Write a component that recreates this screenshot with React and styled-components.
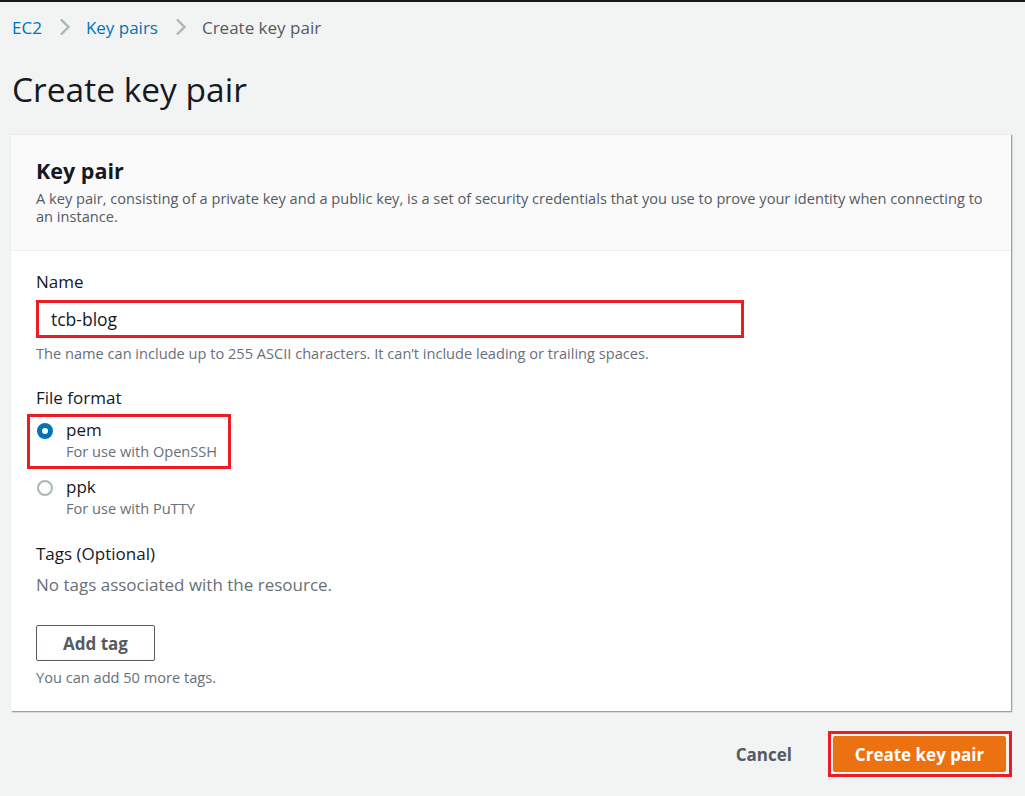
import styled, { createGlobalStyle } from "styled-components";

const GlobalStyle = createGlobalStyle`
   html, body {
      margin: 0;
      padding: 0;
      background: #f2f3f3;
   }
   body {
      font-family: "Open Sans", "Noto Sans", Arial, sans-serif;
      color: #16191f;
   }
`;

// styled
const Page = styled.div`
   min-height: 796px;
   box-sizing: border-box;
   border-top: 2px solid #1a1a1a;
   padding: 0 14px 0 11px;
`;
const Breadcrumbs = styled.nav`
   display: flex;
   align-items: center;
   height: 50px;
   padding-left: 1px;
   font-size: 17px;
   & a {
      color: #0073bb;
      text-decoration: none;
   }
   & .current {
      color: #545b64;
   }
`;
const Chevron = styled.span`
   display: flex;
   align-items: center;
   margin: 0 15px 0 17px;
`;
const Title = styled.h1`
   margin: 15px 0 23px 1px;
   font-size: 33.5px;
   font-weight: 400;
   line-height: 44px;
   color: #16191f;
`;
const Panel = styled.section`
   background: #fff;
   box-shadow: 1px 1px 1px 0 rgba(0, 28, 36, 0.3), 1px 1px 2px 0 rgba(0, 28, 36, 0.15);
   border-top: 1px solid #eaeded;
`;
const PanelHeader = styled.header`
   background: #fafafa;
   border-bottom: 1px solid #eaeded;
   padding: 22px 24px 25px 25px;
   & h2 {
      margin: 0 0 4px;
      font-size: 21.5px;
      font-weight: 700;
      line-height: 28px;
   }
   & p {
      margin: 0;
      font-size: 14.6px;
      line-height: 18px;
      color: #545b64;
   }
`;
const PanelBody = styled.div`
   padding: 20px 24px 25px 25px;
`;
const Field = styled.div`
   margin-bottom: ${(p) => p.gap || 20}px;
`;
const Label = styled.div`
   font-size: 17px;
   line-height: 22px;
   margin-bottom: ${(p) => p.below ?? 6}px;
`;
const Hint = styled.div`
   font-size: 14.6px;
   line-height: 18px;
   color: #687078;
   margin-top: ${(p) => p.top || 6}px;
`;
const TextInput = styled.div`
   width: 708px;
   height: 38px;
   box-sizing: border-box;
   border: 3px solid #ec1c24;
   display: flex;
   align-items: center;
   padding-left: 12px;
   font-size: 17.5px;
   color: #16191f;
`;
const RadioGroup = styled.div`
   display: flex;
   flex-direction: column;
   gap: 2px;
`;
const RadioOption = styled.label`
   display: flex;
   align-items: flex-start;
   gap: 13px;
   box-sizing: border-box;
   width: 204px;
   margin-left: -9px;
   padding: 2px 0 5px 7px;
   border: 3px solid ${(p) => (p.highlight ? "#ec1c24" : "transparent")};
   & .text {
      display: flex;
      flex-direction: column;
   }
   & .name {
      font-size: 17px;
      line-height: 22px;
   }
   & .sub {
      font-size: 14.6px;
      line-height: 20px;
      color: #687078;
   }
`;
const RadioDot = styled.span`
   flex: none;
   width: 16px;
   height: 16px;
   margin-top: 4px;
   box-sizing: border-box;
   border-radius: 50%;
   background: #fff;
   border: ${(p) => (p.checked ? "5px solid #0073bb" : "2px solid #aab7b8")};
`;
const EmptyText = styled.div`
   font-size: 17px;
   line-height: 22px;
   color: #687078;
   margin-top: 9px;
`;
const SecondaryButton = styled.button`
   display: block;
   margin-top: 29px;
   width: 119px;
   height: 36px;
   background: #fff;
   border: 1px solid #545b64;
   border-radius: 2px;
   font-family: inherit;
   font-size: 17px;
   font-weight: 700;
   color: #545b64;
`;
const Actions = styled.div`
   display: flex;
   justify-content: flex-end;
   align-items: center;
   margin-top: 20px;
   margin-right: -1px;
   gap: 36px;
`;
const LinkButton = styled.button`
   background: none;
   border: none;
   font-family: inherit;
   font-size: 17px;
   font-weight: 700;
   color: #545b64;
   padding: 0;
`;
const Highlight = styled.div`
   border: 3px solid #ec1c24;
   padding: 2px 3px 2px 2px;
`;
const PrimaryButton = styled.button`
   display: block;
   width: 173px;
   height: 36px;
   background: #ec7211;
   border: 1px solid #ec7211;
   border-radius: 2px;
   font-family: inherit;
   font-size: 17px;
   font-weight: 700;
   color: #fff;
`;

const ChevronIcon = () => (
   <svg width="12" height="18" viewBox="0 0 12 18">
      <path d="M2 1.5 L9.5 9 L2 16.5" fill="none" stroke="#aab7b8" strokeWidth="2.4" />
   </svg>
);

export default function App() {
   const formats = [
      { name: "pem", sub: "For use with OpenSSH", checked: true },
      { name: "ppk", sub: "For use with PuTTY", checked: false },
   ];

   return (
      <>
         <GlobalStyle />
         <Page>
            <Breadcrumbs>
               <a href="#">EC2</a>
               <Chevron><ChevronIcon /></Chevron>
               <a href="#">Key pairs</a>
               <Chevron><ChevronIcon /></Chevron>
               <span className="current">Create key pair</span>
            </Breadcrumbs>
            <Title>Create key pair</Title>
            <Panel>
               <PanelHeader>
                  <h2>Key pair</h2>
                  <p>
                     A key pair, consisting of a private key and a public key, is a set of security credentials that you use to prove your identity when connecting to an instance.
                  </p>
               </PanelHeader>
               <PanelBody>
                  <Field gap={25}>
                     <Label below={7}>Name</Label>
                     <TextInput>tcb-blog</TextInput>
                     <Hint top={6}>The name can include up to 255 ASCII characters. It can’t include leading or trailing spaces.</Hint>
                  </Field>
                  <Field gap={17}>
                     <Label below={5}>File format</Label>
                     <RadioGroup>
                        {formats.map((f, index) => (
                           <RadioOption key={index} highlight={f.checked}>
                              <RadioDot checked={f.checked} />
                              <span className="text">
                                 <span className="name">{f.name}</span>
                                 <span className="sub">{f.sub}</span>
                              </span>
                           </RadioOption>
                        ))}
                     </RadioGroup>
                  </Field>
                  <div>
                     <Label below={0}>Tags (Optional)</Label>
                     <EmptyText>No tags associated with the resource.</EmptyText>
                     <SecondaryButton>Add tag</SecondaryButton>
                     <Hint top={7}>You can add 50 more tags.</Hint>
                  </div>
               </PanelBody>
            </Panel>
            <Actions>
               <LinkButton>Cancel</LinkButton>
               <Highlight>
                  <PrimaryButton>Create key pair</PrimaryButton>
               </Highlight>
            </Actions>
         </Page>
      </>
   );
}
